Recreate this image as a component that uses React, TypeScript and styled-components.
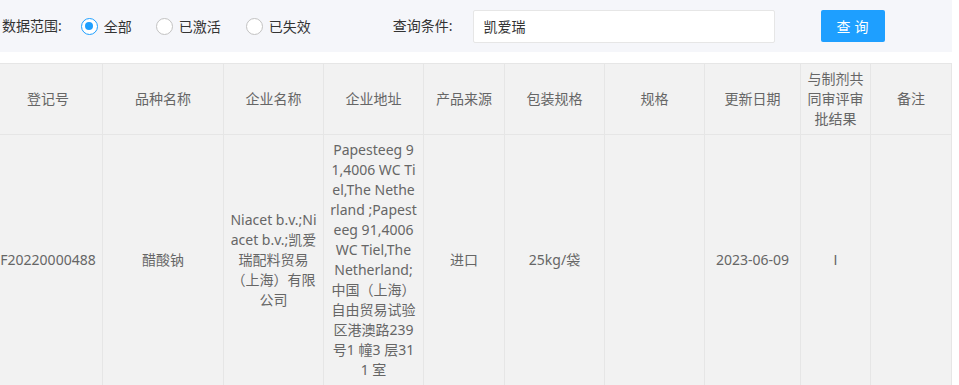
import React from "react";
import styled, { createGlobalStyle } from "styled-components";

const Global = createGlobalStyle`
  html, body { margin: 0; padding: 0; background: #fff; }
  body {
    font-family: "Noto Sans", "Noto Sans CJK SC", sans-serif;
    font-size: 14px;
    color: #333;
    overflow: hidden;
  }
  * { box-sizing: border-box; }
`;

const Page = styled.div`
  width: 959px;
  height: 385px;
  overflow: hidden;
`;

const Toolbar = styled.div`
  width: 952px;
  height: 52px;
  background: #f5f6fa;
  display: flex;
  align-items: center;
  padding-left: 2px;
`;

const Label = styled.span`
  color: #333;
  line-height: 20px;
  margin-right: ${(p: { gap: number }) => p.gap}px;
  white-space: nowrap;
`;

const RadioItem = styled.label`
  display: flex;
  align-items: center;
  gap: 6px;
  margin-right: ${(p: { gap: number }) => p.gap}px;
  cursor: pointer;
  color: #333;
`;

const RadioIcon = styled.span<{ checked?: boolean }>`
  width: 17px;
  height: 17px;
  border-radius: 50%;
  border: 1px solid ${(p) => (p.checked ? "#1e9fff" : "#c2c2c2")};
  display: flex;
  align-items: center;
  justify-content: center;
  background: #fff;
  &::after {
    content: "";
    width: 8px;
    height: 8px;
    border-radius: 50%;
    background: #1e9fff;
    display: ${(p) => (p.checked ? "block" : "none")};
  }
`;

const SearchInput = styled.input`
  width: 302px;
  height: 33px;
  border: 1px solid #e6e6e6;
  border-radius: 2px;
  background: #fff;
  padding: 0 10px;
  font-family: inherit;
  font-size: 14px;
  color: #333;
  outline: none;
  margin-right: 46px;
`;

const Button = styled.button`
  width: 64px;
  height: 32px;
  border: none;
  border-radius: 2px;
  background: #1e9fff;
  color: #fff;
  font-family: inherit;
  font-size: 14px;
  letter-spacing: 4px;
  padding: 0 0 0 4px;
  cursor: pointer;
`;

const TableWrap = styled.div`
  margin-top: 11px;
  margin-left: -7px;
`;

const Table = styled.table`
  width: 958px;
  table-layout: fixed;
  border-collapse: collapse;
  color: #666;
`;

const Th = styled.th`
  background: #f2f2f2;
  border: 1px solid #e6e6e6;
  font-weight: normal;
  padding: 5px 5px;
  line-height: 20px;
  text-align: center;
  vertical-align: middle;
  height: 71px;
`;

const Td = styled.td<{ plain?: boolean }>`
  background: #f2f2f2;
  border: 1px solid #e6e6e6;
  padding: 5px 5px;
  line-height: 20px;
  text-align: center;
  vertical-align: middle;
  word-break: break-all;
  font-family: ${(p) =>
    p.plain ? `"Liberation Sans", sans-serif` : "inherit"};
`;

const HeadText = styled.div`
  width: ${(p: { w?: number }) => (p.w ? `${p.w}px` : "auto")};
  margin: 0 auto;
`;

const widths = [109, 121, 100, 100, 81, 100, 100, 96, 70, 81];

const headers = [
  "登记号",
  "品种名称",
  "企业名称",
  "企业地址",
  "产品来源",
  "包装规格",
  "规格",
  "更新日期",
  "与制剂共同审评审批结果",
  "备注",
];

const addressLines = [
  "Papesteeg 9",
  "1,4006 WC Ti",
  "el,The Nethe",
  "rland ;Papest",
  "eeg 91,4006",
  "WC Tiel,The",
  "Netherland;",
  "中国（上海）",
  "自由贸易试验",
  "区港澳路239",
  "号1 幢3 层31",
  "1 室",
];

const companyLines = [
  "Niacet b.v.;Ni",
  "acet b.v.;凯爱",
  "瑞配料贸易",
  "（上海）有限",
  "公司",
];

const Line = styled.div`
  white-space: nowrap;
`;

export default function App() {
  return (
    <Page>
      <Global />
      <Toolbar>
        <Label gap={19}>数据范围:</Label>
        <RadioItem gap={24}>
          <RadioIcon checked />
          全部
        </RadioItem>
        <RadioItem gap={25}>
          <RadioIcon />
          已激活
        </RadioItem>
        <RadioItem gap={82}>
          <RadioIcon />
          已失效
        </RadioItem>
        <Label gap={20}>查询条件:</Label>
        <SearchInput defaultValue="凯爱瑞" />
        <Button>查询</Button>
      </Toolbar>
      <TableWrap>
        <Table>
          <colgroup>
            {widths.map((w, i) => (
              <col key={i} style={{ width: w }} />
            ))}
          </colgroup>
          <thead>
            <tr>
              {headers.map((h, i) => (
                <Th key={i}>
                  <HeadText w={i === 8 ? 58 : undefined}>{h}</HeadText>
                </Th>
              ))}
            </tr>
          </thead>
          <tbody>
            <tr>
              <Td>F20220000488</Td>
              <Td>醋酸钠</Td>
              <Td>
                {companyLines.map((l, i) => (
                  <Line key={i}>{l}</Line>
                ))}
              </Td>
              <Td>
                {addressLines.map((l, i) => (
                  <Line key={i}>{l}</Line>
                ))}
              </Td>
              <Td>进口</Td>
              <Td>25kg/袋</Td>
              <Td></Td>
              <Td>2023-06-09</Td>
              <Td plain>I</Td>
              <Td></Td>
            </tr>
          </tbody>
        </Table>
      </TableWrap>
    </Page>
  );
}
